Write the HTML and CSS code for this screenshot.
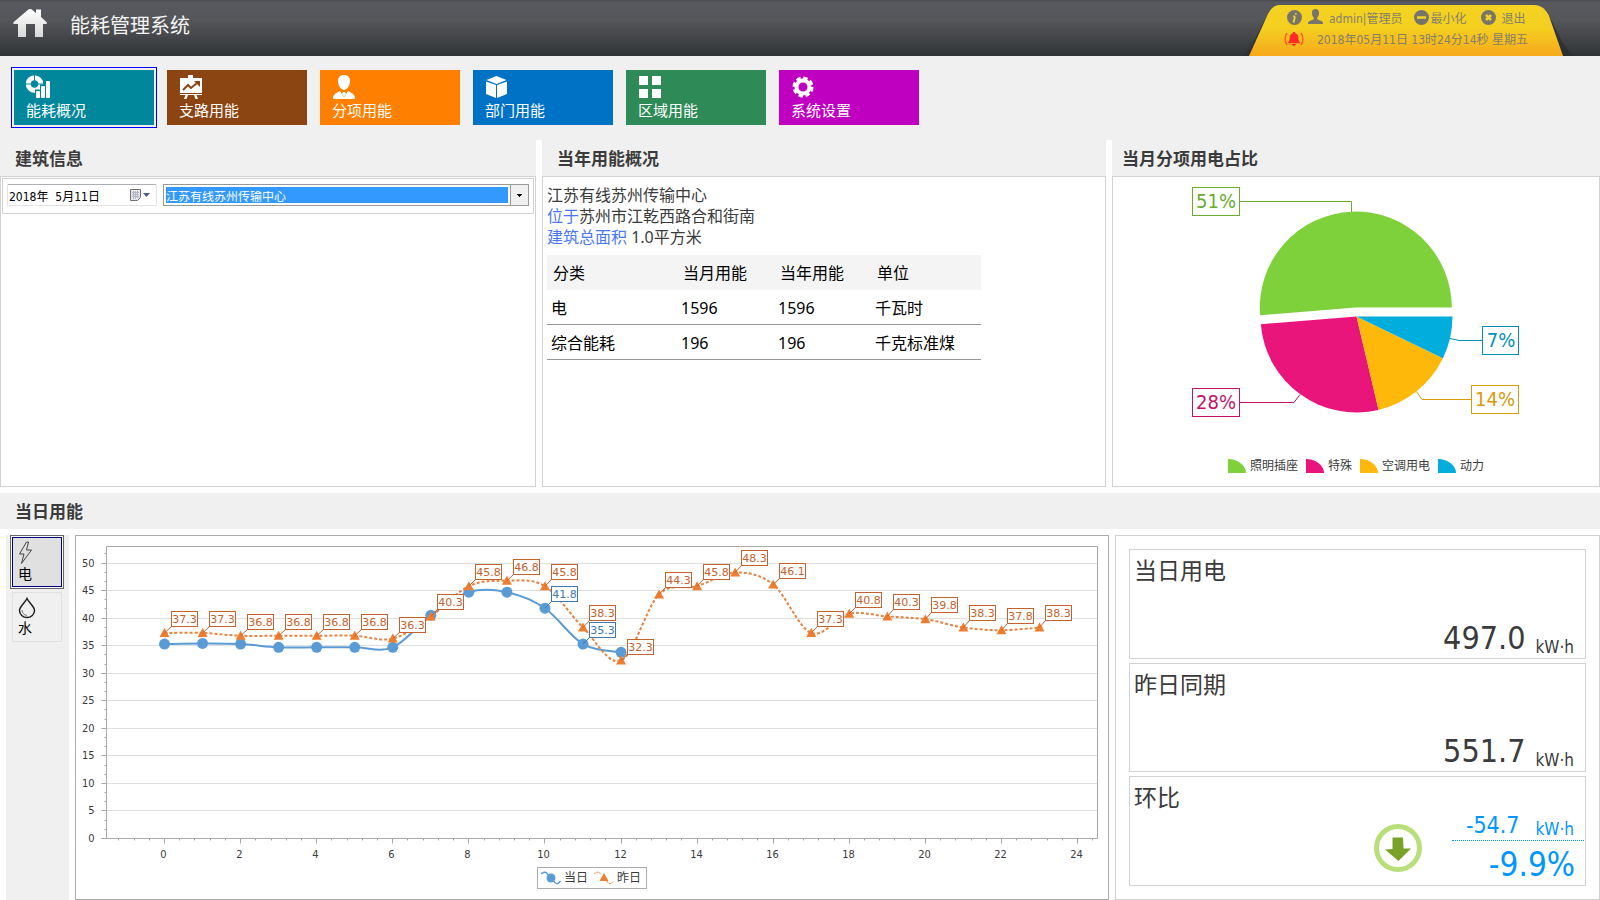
FILE: index.html
```
<!DOCTYPE html>
<html lang="zh-CN">
<head>
  <meta charset="UTF-8" />
  <meta name="viewport" content="width=device-width, initial-scale=1.0"/>
  <title>能耗管理系统</title>
  <link rel="stylesheet" href="styles.css">
</head>
<body>
  <header class="header">
    <a class="home" href="#" aria-label="首页">
      <svg width="34" height="30" viewBox="0 0 34 30">
        <defs>
          <linearGradient id="homeFill" x1="0" y1="0" x2="0" y2="1">
            <stop offset="0" stop-color="#ffffff"/>
            <stop offset="1" stop-color="#d8d8d8"/>
          </linearGradient>
        </defs>
        <path fill="url(#homeFill)" d="M17 1c1 0 1.600.4 2.400 1l3.600 3V1.500h5V9l5.500 5c.8.8.4 2-.8 2H30v13h-8V16h-9v13H5V16H1.500c-1.200 0-1.600-1.200-.8-2L14.800 2c.8-.6 1.400-1 2.200-1z"/>
      </svg>
    </a>
    <h1>能耗管理系统</h1>

    <div class="user-tab">
      <svg class="user-tab-bg" viewBox="0 0 334 51" preserveAspectRatio="none">
        <defs>
          <linearGradient id="tabFill" x1="0" y1="0" x2="0" y2="1">
            <stop offset="0" stop-color="#f4d322"/>
            <stop offset="0.45" stop-color="#f4cf20"/>
            <stop offset="1" stop-color="#f6a81b"/>
          </linearGradient>
        </defs>
        <path fill="#2b2d30" opacity="0.7" d="M0 51C14 42 18 6 37 2H292C314 6 314 45 334 51z"/>
        <path fill="url(#tabFill)" d="M6 51L24 11C28 3 31 0 38 0H291C299 0 303 5 306 11L320 51z"/>
      </svg>
      <div class="user-row">
        <a href="#" aria-label="关于">
          <svg width="15" height="15" viewBox="0 0 15 15"><circle cx="7.500" cy="7.500" r="7.500" fill="#77756a"/><path d="M9 3.200L8.700 4.600M8 6.300L6.800 11.600M6.200 6.300H8M5.800 11.600H7.800" stroke="#f4d322" stroke-width="1.800" fill="none"/></svg>
        </a>
        <a href="#" class="user-name">
          <svg width="15" height="15" viewBox="0 0 15 15"><path fill="#77756a" d="M7.500 0C10 0 11 1.600 11 4c0 2-.7 3.600-1.700 4.500v1.700c1 .8 4.200 1.400 5.200 2.600.4.600.5 1.200.5 2.200H0c0-1 .1-1.600.5-2.200 1-1.200 4.200-1.800 5.200-2.600V8.500C4.700 7.600 4 6 4 4c0-2.400 1-4 3.500-4z"/></svg>
          <span>admin|管理员</span>
        </a>
        <button type="button" class="link-btn">
          <svg width="15" height="15" viewBox="0 0 15 15"><circle cx="7.500" cy="7.500" r="7.500" fill="#77756a"/><path d="M3 7.500H12" stroke="#f4d322" stroke-width="2.500"/></svg>
          <span>最小化</span>
        </button>
        <button type="button" class="link-btn exit-btn">
          <svg width="15" height="15" viewBox="0 0 15 15"><circle cx="7.500" cy="7.500" r="7.500" fill="#77756a"/><path d="M5 5l5 5M10 5l-5 5" stroke="#f4d322" stroke-width="2.500"/></svg>
          <span>退出</span>
        </button>
      </div>
      <div class="user-row date-row">
        <svg width="22" height="16" viewBox="0 0 22 16"><path fill="#ff2a2a" d="M11 1c.8 0 1.300.5 1.300 1.200C14.500 2.800 15.400 4.500 15.400 7c0 2.600.6 3.600 1.600 4.400v.8H5v-.8C6 10.600 6.600 9.600 6.600 7c0-2.500.9-4.200 3.100-4.800C9.700 1.500 10.200 1 11 1zM9 13h4c0 1.200-.8 2-2 2s-2-.8-2-2z"/><path d="M4 2C1.500 5 1.500 11 4 14M18 2c2.500 3 2.500 9 0 12" stroke="#ff5a2a" stroke-width="1.500" fill="none"/></svg>
        <span>2018年05月11日 13时24分14秒 星期五</span>
      </div>
    </div>
  </header>

  <nav class="tiles">
    <a href="#" class="tile teal active">
      <svg width="24" height="24" viewBox="0 0 24 24">
        <circle cx="8.500" cy="9" r="6.200" fill="none" stroke="#fff" stroke-width="5"/>
        <path d="M8.500 0V6M0 9H5M11.500 9H18" stroke="#00879c"/>
        <path fill="#00879c" d="M9 14.500h5V9.500h5V5h5v19H9z"/>
        <rect fill="#fff" x="10" y="16" width="4" height="7" rx="1"/>
        <rect fill="#fff" x="15" y="11" width="4" height="12" rx="1"/>
        <rect fill="#fff" x="20" y="6" width="4" height="17" rx="1"/>
      </svg>
      <span>能耗概况</span>
    </a>
    <a href="#" class="tile brown">
      <svg width="24" height="24" viewBox="0 0 24 24">
        <path fill="#fff" d="M9 0h5v3H9zM1 3h22v15H1zM1 19h22v1H1zM6.500 20h2.500L7.500 24H5zM15 20h2.500L19 24h-2.500z"/>
        <path d="M4 15l5-5 3 3 6-5" stroke="#8b4513" stroke-width="2" fill="none"/><path fill="#8b4513" d="M15 6h6v6z"/>
      </svg>
      <span>支路用能</span>
    </a>
    <a href="#" class="tile orange">
      <svg width="24" height="24" viewBox="0 0 24 24">
        <path fill="#fff" d="M12 0c4 0 6 2.500 6 6 0 4-2 8-6 9-4-1-6-5-6-9 0-3.500 2-6 6-6zM1 24c0-4 2-5.500 7-8l3.500 6h1L16 16c5 2.500 7 4 7 8zM11 17h2l1 2-2 3-2-3z"/>
      </svg>
      <span>分项用能</span>
    </a>
    <a href="#" class="tile blue">
      <svg width="24" height="24" viewBox="0 0 24 24">
        <path fill="#fff" d="M11.500 1L21.500 5 11.500 9 1.500 5zM1 6.500L11 10v13L1 19zM22 6.500L12 10v13l10-4z"/>
      </svg>
      <span>部门用能</span>
    </a>
    <a href="#" class="tile green">
      <svg width="24" height="24" viewBox="0 0 24 24">
        <path fill="#fff" d="M1 1h9v9H1zM14 1h9v9h-9zM1 14h9v9H1zM14 14h9v9h-9z"/>
      </svg>
      <span>区域用能</span>
    </a>
    <a href="#" class="tile purple">
      <svg width="24" height="24" viewBox="0 0 24 24">
        <circle cx="12" cy="12" r="6.500" fill="none" stroke="#fff" stroke-width="4"/>
        <circle cx="12" cy="12" r="9" fill="none" stroke="#fff" stroke-width="3" stroke-dasharray="4.400 2.670"/>
        <circle cx="12" cy="12" r="2.500" fill="none" stroke="#fff" stroke-width="0"/>
      </svg>
      <span>系统设置</span>
    </a>
  </nav>

  <main>
    <div class="top-panels">
      <section class="panel">
        <h2>建筑信息</h2>
        <div class="panel-body building">
          <form class="filter">
            <div class="date-box">
              <input type="text" value="2018年  5月11日" aria-label="日期">
              <button type="button" aria-label="选择日期">
                <svg width="22" height="14" viewBox="0 0 22 14"><path fill="#e4e6ea" stroke="#77706f" d="M1.500 1.500h10v8l-3 3h-7z"/><path d="M3 4.500h7M3 6.500h7M3 8.500h7M4.500 3v8M6.500 3v8M8.500 3v7" stroke="#b4b8c4"/><path fill="#4a5f86" d="M14 5h7l-3.500 4z"/></svg>
              </button>
            </div>
            <div class="select-box">
              <select aria-label="建筑">
                <option>江苏有线苏州传输中心</option>
              </select>
            </div>
          </form>
        </div>
      </section>

      <section class="panel">
        <h2>当年用能概况</h2>
        <div class="panel-body overview">
          <p>江苏有线苏州传输中心</p>
          <p><span class="key">位于</span>苏州市江乾西路合和街南</p>
          <p><span class="key">建筑总面积</span> 1.0平方米</p>
          <table>
            <thead>
              <tr><th class="col-type">分类</th><th class="col-num">当月用能</th><th class="col-num">当年用能</th><th class="col-unit">单位</th></tr>
            </thead>
            <tbody>
              <tr><td>电</td><td>1596</td><td>1596</td><td>千瓦时</td></tr>
              <tr><td>综合能耗</td><td>196</td><td>196</td><td>千克标准煤</td></tr>
            </tbody>
          </table>
        </div>
      </section>

      <section class="panel share">
        <h2>当月分项用电占比</h2>
        <div class="panel-body pie-body">
          <svg class="pie" width="328" height="231" viewBox="0 0 328 231">
            <path fill="#7fd13b" d="M163.800 120.500L259.800 120.500A96 96 0 1 0 68.100 128.200z"/>
            <path fill="#ea157a" d="M164.500 129.500L68.800 137.200A96 96 0 0 0 186.600 222.900z"/>
            <path fill="#feb80a" d="M164.500 129.500L186.600 222.900A96 96 0 0 0 250.900 171.300z"/>
            <path fill="#00addc" d="M164.500 129.500L250.900 171.300A96 96 0 0 0 260.500 129.500z"/>
            <g fill="none" stroke="#68ad2f">
              <path d="M48 14.500H159.500V25"/><rect x="0.500" y="0.500" width="47" height="28"/>
            </g>
            <g fill="none" stroke="#c41166">
              <path d="M48 215.500H102L108 207.500"/><rect x="0.500" y="201.500" width="47" height="28"/>
            </g>
            <g fill="none" stroke="#d69b08">
              <path d="M279 212.500H230L224.500 204.500"/><rect x="279.500" y="198.500" width="47" height="28"/>
            </g>
            <g fill="none" stroke="#0090b8">
              <path d="M290 153.500H267L258 151.500"/><rect x="290.500" y="139.500" width="36" height="28"/>
            </g>
            <text x="24" y="21" fill="#68ad2f">51%</text>
            <text x="24" y="222" fill="#c41166">28%</text>
            <text x="303" y="219" fill="#d69b08">14%</text>
            <text x="309" y="160" fill="#0090b8">7%</text>
          </svg>
          <ul class="pie-legend">
            <li><svg width="18" height="14"><path fill="#7fd13b" d="M0 0C9 0 18 6 18 14H0z"/></svg>照明插座</li>
            <li><svg width="18" height="14"><path fill="#ea157a" d="M0 0C9 0 18 6 18 14H0z"/></svg>特殊</li>
            <li><svg width="18" height="14"><path fill="#feb80a" d="M0 0C9 0 18 6 18 14H0z"/></svg>空调用电</li>
            <li><svg width="18" height="14"><path fill="#00addc" d="M0 0C9 0 18 6 18 14H0z"/></svg>动力</li>
          </ul>
        </div>
      </section>
    </div>

    <h2 class="day-title">当日用能</h2>

    <div class="day">
      <div class="types">
        <button type="button" class="type active">
          <svg width="16" height="24" viewBox="0 0 16 24"><path fill="none" stroke="#444" d="M8.500 1L1.500 13H6L3.500 22.500 13.500 9H8.500L10.500 1z"/></svg>
          <span>电</span>
        </button>
        <button type="button" class="type">
          <svg width="18" height="22" viewBox="0 0 18 22"><path fill="none" stroke="#222" stroke-width="1.500" d="M9 1.500C7 6 1.500 9.500 1.500 13.500a7.500 7 0 0 0 15 0C16.500 9.500 11 6 9 1.500z"/><path fill="none" stroke="#777" d="M4 13c0 3 2 5 5 5.500"/></svg>
          <span>水</span>
        </button>
      </div>

      <div class="chart">
        <svg id="chart"></svg>
        <div class="chart-legend">
          <span><svg width="20" height="14" viewBox="0 0 20 14"><path d="M0 3C3 0 6 1 7 4M13 10c1 3 4 4 6.500 0" fill="none" stroke="#5b9bd5" stroke-width="1.500"/><circle cx="10" cy="7" r="4.500" fill="#5b9bd5"/></svg>当日</span>
          <span><svg width="20" height="14" viewBox="0 0 20 14"><path d="M0 3C3 0 6 1 7 4M13 10c1 3 4 4 6.500 0" fill="none" stroke="#ed7d31" stroke-dasharray="2 1"/><path d="M10 2l4.500 8h-9z" fill="#ed7d31"/></svg>昨日</span>
        </div>
      </div>

      <div class="stats">
        <div class="stat">
          <h3>当日用电</h3>
          <div class="value"><strong>497.0</strong><span>kW·h</span></div>
        </div>
        <div class="stat">
          <h3>昨日同期</h3>
          <div class="value"><strong>551.7</strong><span>kW·h</span></div>
        </div>
        <div class="stat">
          <h3>环比</h3>
          <div class="compare">
            <svg width="48" height="48" viewBox="0 0 48 48"><circle cx="24" cy="24" r="21.500" fill="none" stroke="#b9df7b" stroke-width="5"/><path fill="#7aa22a" d="M18.500 13.500L29 13.500 29.500 24.500 37 24.500 24.500 37 11 25.500 18.500 25z"/></svg>
            <div class="diff">
              <div class="diff-value"><b>-54.7</b><span>kW·h</span></div>
              <div class="diff-rate">-9.9%</div>
            </div>
          </div>
        </div>
      </div>
    </div>
  </main>

  <script src="chart.js"></script>
</body>
</html>
```
FILE: styles.css
```
* {
  margin: 0;
  padding: 0;
  box-sizing: border-box;
}

body {
  min-height: 100vh;
  display: flex;
  flex-direction: column;
  background: #f0f0f0;
  color: #3b3b3b;
  font-family: 'Noto Sans', 'Noto Sans CJK SC', sans-serif;
  font-size: 16px;
}

button,
input,
select {
  font: inherit;
  color: inherit;
}

a {
  color: inherit;
  text-decoration: none;
}

svg {
  display: block;
  flex-shrink: 0;
}

/* Header */
.header {
  height: 56px;
  display: flex;
  align-items: flex-start;
  padding: 0 31px 0 13px;
  background: linear-gradient(to bottom, #48494d 0, #58595e 2px, #55565a 20px, #45474a 36px, #303335 100%);
}

.home {
  padding-top: 8px;
}

.header h1 {
  margin-left: 23px;
  font-size: 20px;
  font-weight: normal;
  line-height: 52px;
  color: #f4f4f4;
}

.user-tab {
  position: relative;
  width: 334px;
  height: 51px;
  margin: 5px -8px 0 auto;
  padding: 2px 0 0 44px;
  font-family: 'DejaVu Sans Condensed', 'Noto Sans CJK SC', sans-serif;
  font-size: 12px;
  color: #85806a;
}

.user-tab-bg {
  position: absolute;
  inset: 0;
  width: 100%;
  height: 100%;
}

.user-row {
  position: relative;
  display: flex;
  align-items: center;
  gap: 6px;
  height: 21px;
  white-space: nowrap;
}

.user-name {
  display: flex;
  gap: 6px;
  margin-right: 6px;
}

.link-btn {
  display: flex;
  align-items: center;
  gap: 1px;
  background: none;
  border: none;
  cursor: pointer;
}

.exit-btn {
  gap: 6px;
  margin-left: 8px;
}

.date-row {
  gap: 12px;
  margin-left: -4px;
}

/* Navigation tiles */
.tiles {
  display: flex;
  gap: 13px;
  height: 84px;
  padding: 14px;
}

.tile {
  width: 140px;
  height: 55px;
  padding: 5px 12px;
  color: #fff;
  font-size: 15px;
  line-height: 22px;
}

.tile.active {
  outline: 1px solid #0000ff;
  outline-offset: 2px;
}

.teal { background: #00879c; }
.brown { background: #8b4513; }
.orange { background: #ff8000; }
.blue { background: #0072c6; }
.green { background: #2e8b57; }
.purple { background: #c000c0; }

/* Panels */
main {
  flex: 1;
  display: flex;
  flex-direction: column;
  background: #fff;
}

.top-panels {
  display: grid;
  grid-template-columns: 536fr 564fr 488fr;
  gap: 6px;
}

.panel {
  display: flex;
  flex-direction: column;
  min-width: 0;
}

h2 {
  height: 36px;
  padding-left: 15px;
  background: #f0f0f0;
  font-size: 17px;
  font-weight: bold;
  line-height: 38px;
}

.share h2 {
  padding-left: 10px;
}

.panel-body {
  flex: 1;
  min-height: 311px;
  border: 1px solid #d2d2d2;
}

.building {
  padding: 1px;
}

.filter {
  display: flex;
  gap: 6px;
  padding: 5px 4px 7px;
  border: 1px solid #d2d2d2;
  color: #000;
  font-family: 'DejaVu Sans Condensed', 'Noto Sans CJK SC', sans-serif;
  font-size: 12px;
}

.date-box {
  display: flex;
  width: 150px;
  height: 22px;
  border: 1px solid #e3e3e3;
  border-top-color: #abadb3;
  border-radius: 2px;
}

.date-box input {
  flex: 1;
  min-width: 0;
  padding-left: 1px;
  border: none;
  background: none;
  white-space: pre;
}

.date-box button {
  padding: 0 5px;
  border: none;
  background: none;
}

.select-box {
  flex: 1;
  display: flex;
  height: 22px;
  border: 1px solid #999;
}

.select-box::after {
  content: '';
  width: 17px;
  margin-left: -17px;
  border-left: 1px solid #999;
  background: linear-gradient(#000, #000) 6px 9px / 5px 1px no-repeat,
              linear-gradient(#000, #000) 7px 10px / 3px 1px no-repeat,
              linear-gradient(#000, #000) 8px 11px / 1px 1px no-repeat,
              #f0f0f0;
  pointer-events: none;
}

.select-box select {
  flex: 1;
  min-width: 0;
  padding: 4px 19px 0 2px;
  border: 2px solid #fff;
  border-width: 2px 0;
  appearance: none;
  background: linear-gradient(#3399ff, #3399ff) 2px 0 / calc(100% - 21px) 100% no-repeat;
  background-clip: padding-box;
  color: #fff;
  line-height: 12px;
}

.overview {
  padding: 8px 4px;
}

.overview p {
  line-height: 21px;
}

.key {
  color: #4b76f5;
}

table {
  width: 434px;
  margin-top: 7px;
  border-spacing: 0;
  table-layout: fixed;
  color: #000;
}

th,
td {
  height: 35px;
  line-height: 24px;
  text-align: left;
  font-weight: normal;
}

th {
  padding: 0 6px;
  background: #f4f4f4;
}

td {
  padding: 1px 4px 0;
  border-bottom: 1px solid #999;
}

.col-type { width: 130px; }
.col-num { width: 97px; }
.col-unit { width: 110px; }

/* Pie */
.pie-body {
  display: flex;
  flex-direction: column;
  align-items: center;
  gap: 39px;
  padding-top: 10px;
}

.pie text {
  font-family: 'DejaVu Sans Condensed', sans-serif;
  font-size: 20px;
  text-anchor: middle;
}

.pie-legend {
  display: flex;
  gap: 8px;
  list-style: none;
  font-size: 12px;
  line-height: 18px;
}

.pie-legend li {
  display: flex;
  align-items: center;
  gap: 4px;
}

/* Day section */
.day-title {
  margin: 6px 0;
}

.day {
  flex: 1;
  display: grid;
  grid-template-columns: 63px 1034fr 485fr;
  gap: 6px;
  padding-left: 6px;
}

.types {
  display: flex;
  flex-direction: column;
  gap: 5px;
  padding: 2px 6px;
  background: #f0f0f0;
}

.type {
  width: 50px;
  height: 50px;
  padding: 3px 5px;
  border: 1px solid #e0e0e0;
  background: #f0f0f0;
  color: #000;
  font-size: 14px;
  line-height: 18px;
  text-align: left;
}

.type.active {
  border-color: #00007f;
  background: #e0e0e0;
  box-shadow: 0 0 0 1px #fff;
  outline: 1px solid #666;
  outline-offset: 1px;
}

.chart {
  display: flex;
  flex-direction: column;
  align-items: center;
  min-width: 0;
  padding-bottom: 10px;
  border: 1px solid #ababab;
}

#chart {
  width: 100%;
  flex: 1 1 300px;
  min-height: 0;
}

.grid-line { stroke: #dedede; }
.axis { stroke: #a8a8a8; fill: none; }

.tick-label {
  font: 11px 'DejaVu Sans Condensed', sans-serif;
  fill: #3b3b3b;
}

.line {
  fill: none;
  stroke-width: 2;
}

.today .line { stroke: #5b9bd5; }
.today .marker { fill: #5b9bd5; }
.yesterday .marker { fill: #ed7d31; }

.yesterday .line {
  stroke: #e58343;
  stroke-width: 2;
  stroke-dasharray: 3 2;
}

.tag rect { fill: #fff; }

.tag text {
  font: 11px 'DejaVu Sans', sans-serif;
  text-anchor: middle;
}

.tag.today rect,
.tag.today path { stroke: #4178ae; }
.tag.today text { fill: #4178ae; }
.tag.yesterday rect,
.tag.yesterday path { stroke: #c4622d; }
.tag.yesterday text { fill: #c4622d; }

.chart-legend {
  display: flex;
  gap: 6px;
  height: 22px;
  padding: 0 5px 0 3px;
  border: 1px solid #ababab;
  font-size: 12px;
  line-height: 20px;
}

.chart-legend span {
  display: flex;
  align-items: center;
  gap: 3px;
}

/* Right column */
.stats {
  display: flex;
  flex-direction: column;
  gap: 4px;
  padding: 13px;
  border: 1px solid #d2d2d2;
}

.stat {
  flex: 1;
  display: flex;
  flex-direction: column;
  justify-content: space-between;
  border: 1px solid #d2d2d2;
  font-family: 'DejaVu Sans Condensed', 'Noto Sans CJK SC', sans-serif;
}

.stat h3 {
  padding: 9px 4px 0;
  font-size: 23px;
  font-weight: normal;
  line-height: 24px;
}

.value {
  display: flex;
  justify-content: flex-end;
  align-items: flex-end;
  gap: 10px;
  padding-right: 11px;
}

.value strong {
  font-size: 32px;
  font-weight: normal;
  line-height: 40px;
}

.value span,
.diff-value span {
  font-size: 17px;
  line-height: 22px;
}

.compare {
  display: flex;
  justify-content: flex-end;
  align-items: center;
  gap: 30px;
  padding-right: 1px;
  color: #0096ff;
}

.diff {
  width: 132px;
  text-align: right;
}

.diff-value {
  display: flex;
  justify-content: flex-end;
  align-items: flex-end;
  gap: 16px;
  padding-right: 10px;
  border-bottom: 1px dotted #0096ff;
}

.diff-value b {
  font-size: 23px;
  font-weight: normal;
  line-height: 30px;
}

.diff-rate {
  padding: 4px 9px 0 0;
  font-size: 33px;
  line-height: 40px;
}
```
FILE: chart.js
```
const today = [35.3, 35.4, 35.3, 34.7, 34.7, 34.7, 34.7, 40.5, 44.7, 44.7, 41.8, 35.3, 33.8];
const yesterday = [37.3, 37.3, 36.8, 36.8, 36.8, 36.8, 36.3, 40.3, 45.8, 46.8, 45.8, 38.3,
                   32.3, 44.3, 45.8, 48.3, 46.1, 37.3, 40.8, 40.3, 39.8, 38.3, 37.8, 38.3];
const labelled = [10, 11]; // hours of today that carry a label

const xMin = -1.525, xMax = 24.525, yMax = 53;
const margin = { left: 30.5, right: 10.5, top: 10.5, bottom: 28.5 };
const svg = document.getElementById('chart');

// smooth path through the points
function spline(pts) {
  let d = `M${pts[0]}`;
  for (let i = 0; i < pts.length - 1; i++) {
    const p0 = pts[i - 1] || pts[i];
    const p1 = pts[i];
    const p2 = pts[i + 1];
    const p3 = pts[i + 2] || p2;
    d += `C${p1[0] + (p2[0] - p0[0]) / 6},${p1[1] + (p2[1] - p0[1]) / 6} `
       + `${p2[0] - (p3[0] - p1[0]) / 6},${p2[1] - (p3[1] - p1[1]) / 6} ${p2}`;
  }
  return d;
}

function tag(name, x, y, value) {
  const left = Math.round(x) + 6.5;
  const top = Math.round(y) - 21.5;
  return `<g class="tag ${name}"><path d="M${x} ${y}L${left} ${top + 15}"/>
    <rect x="${left}" y="${top}" width="26" height="15"/>
    <text x="${left + 13}" y="${top + 11.5}">${value.toFixed(1)}</text></g>`;
}

function draw() {
  const box = svg.getBoundingClientRect();
  const right = Math.round(box.width) - margin.right;
  const bottom = Math.round(box.height) - margin.bottom;
  const x = v => margin.left + (v - xMin) / (xMax - xMin) * (right - margin.left);
  const y = v => bottom - v / yMax * (bottom - margin.top);
  const snap = v => Math.floor(v) + 0.5;
  let out = '';

  for (let i = 0; i * 5 / 3 < yMax; i++) {
    const v = i * 5 / 3;
    const py = snap(y(v));
    if (i % 3 === 0) {
      out += `<path class="grid-line" d="M${margin.left} ${py}H${right}"/>`;
      out += `<path class="axis" d="M${margin.left - 5} ${py}h5"/>`;
      out += `<text class="tick-label" text-anchor="end" x="${margin.left - 12}" y="${py + 3.5}">${i / 3 * 5}</text>`;
    } else {
      out += `<path class="axis" d="M${margin.left - 2} ${py}h2"/>`;
    }
  }

  for (let i = -3; i * 0.4 < xMax; i++) {
    const px = snap(x(i * 0.4));
    const major = i % 5 === 0;
    out += `<path class="axis" d="M${px} ${bottom}v${major ? 5 : 2}"/>`;
    if (major) {
      out += `<text class="tick-label" text-anchor="middle" x="${px - 1}" y="${bottom + 19}">${i / 5 * 2}</text>`;
    }
  }

  out += `<path class="axis" d="M${margin.left} ${margin.top}H${right}V${bottom}H${margin.left}z"/>`;

  const a = today.map((v, i) => [x(i), y(v)]);
  const b = yesterday.map((v, i) => [x(i), y(v)]);

  out += `<g class="today"><path class="line" d="${spline(a)}"/>`;
  a.forEach(p => out += `<circle class="marker" cx="${p[0]}" cy="${p[1]}" r="5.500"/>`);
  out += `</g><g class="yesterday"><path class="line" d="${spline(b)}"/>`;
  b.forEach(p => out += `<path class="marker" d="M${p[0]} ${p[1] - 5}l5 9h-10z"/>`);
  out += '</g>';

  b.forEach((p, i) => out += tag('yesterday', p[0], p[1], yesterday[i]));
  labelled.forEach(i => out += tag('today', a[i][0], a[i][1], today[i]));

  svg.innerHTML = out;
}

draw();
window.addEventListener('resize', draw);
```
